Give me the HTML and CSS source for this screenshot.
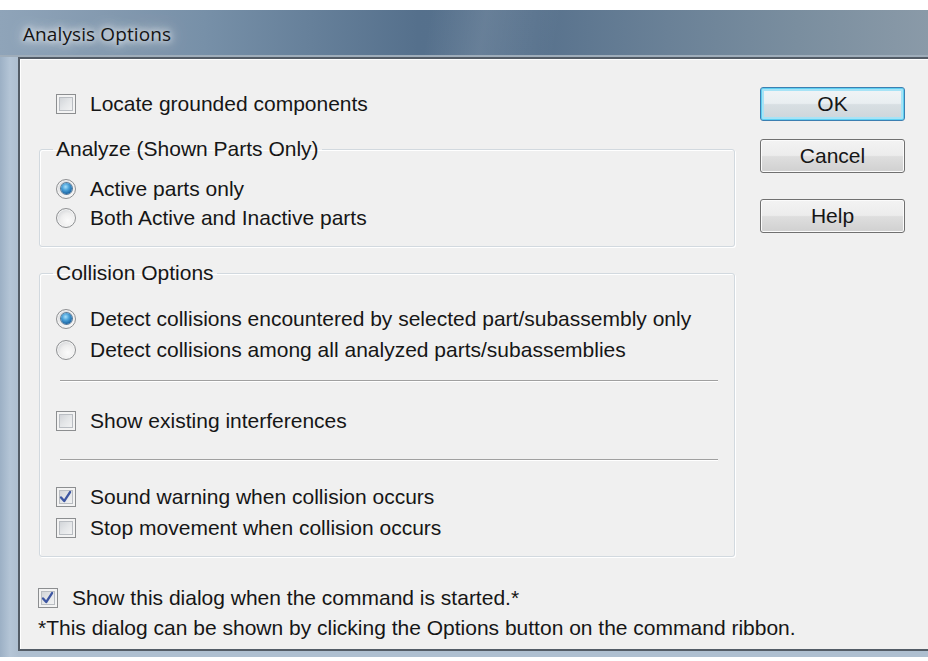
FILE: index.html
```html
<!DOCTYPE html>
<html lang="en">
<head>
<meta charset="utf-8">
<title>Analysis Options</title>
<link rel="stylesheet" href="styles.css">
</head>
<body>
<div class="window">
  <div class="titlebar"><span class="title">Analysis Options</span></div>
  <div class="frame">
    <div class="client">
      <div class="main">
        <div class="options">
          <div class="row locate"><span class="cb"></span><span>Locate grounded components</span></div>

          <fieldset class="group analyze">
            <legend>Analyze (Shown Parts Only)</legend>
            <div class="row"><span class="rb on"><span class="dot"></span></span><span>Active parts only</span></div>
            <div class="row"><span class="rb"></span><span>Both Active and Inactive parts</span></div>
          </fieldset>

          <fieldset class="group collision">
            <legend>Collision Options</legend>
            <div class="row tall"><span class="rb on"><span class="dot"></span></span><span>Detect collisions encountered by selected part/subassembly only</span></div>
            <div class="row tall"><span class="rb"></span><span>Detect collisions among all analyzed parts/subassemblies</span></div>
            <hr class="sep sep1">
            <div class="row interf"><span class="cb"></span><span>Show existing interferences</span></div>
            <hr class="sep sep2">
            <div class="row tall sound"><span class="cb checked"><svg viewBox="0 0 20 20" width="18" height="18"><path d="M4.5 10.5 L8 14.5 L14.5 4.5" fill="none" stroke="#3d56a2" stroke-width="2.6" stroke-linecap="round" stroke-linejoin="round"/></svg></span><span>Sound warning when collision occurs</span></div>
            <div class="row tall"><span class="cb"></span><span>Stop movement when collision occurs</span></div>
          </fieldset>
        </div>

        <div class="buttons">
          <button class="btn default">OK</button>
          <button class="btn cancel">Cancel</button>
          <button class="btn help">Help</button>
        </div>
      </div>

      <div class="footer">
        <div class="row showdlg"><span class="cb checked"><svg viewBox="0 0 20 20" width="18" height="18"><path d="M4.5 10.5 L8 14.5 L14.5 4.5" fill="none" stroke="#3d56a2" stroke-width="2.6" stroke-linecap="round" stroke-linejoin="round"/></svg></span><span>Show this dialog when the command is started.*</span></div>
        <div class="row note">*This dialog can be shown by clicking the Options button on the command ribbon.</div>
      </div>
    </div>
  </div>
</div>
</body>
</html>
```

FILE: styles.css
```css
html, body {
  margin: 0;
  padding: 0;
  background: #ffffff;
}

body {
  font-family: "Liberation Sans", Arial, sans-serif;
  font-size: 21px;
  color: #161616;
  overflow: hidden;
}

.window {
  margin-top: 10px;
  width: 928px;
}

/* glass caption bar */
.titlebar {
  height: 47px;
  display: flex;
  align-items: center;
  padding-left: 23px;
  background:
    linear-gradient(100deg, rgba(255,255,255,0) 0%, rgba(255,255,255,0) 46%, rgba(255,255,255,0.10) 52%, rgba(255,255,255,0) 60%),
    linear-gradient(to right, #8fa4b9 0%, #8399af 12%, #7790a8 22%, #55708c 45%, #58728d 58%, #6a8197 72%, #7a8e9f 86%, #8a9aa8 100%);
  box-shadow: inset 0 -2px 0 #9fadba;
}

.title {
  font-family: "Open Sans", "Noto Sans", sans-serif;
  font-size: 19px;
  color: #151515;
  letter-spacing: 0.1px;
  text-shadow: 0 0 6px rgba(255,255,255,0.95), 0 0 12px rgba(255,255,255,0.9), 0 0 20px rgba(255,255,255,0.7);
}

/* window frame around the client area */
.frame {
  padding: 0 0 6px 18px;
  background: linear-gradient(to right, #9cb0c5 0px, #b4c5d6 10px, #aebfd0 18px);
}

.client {
  background: #f0f0f0;
  border-left: 2px solid #535c66;
  border-top: 2px solid #535c66;
  border-bottom: 2px solid #535c66;
  box-shadow: inset 1px 1px 0 #ffffff;
  height: 594px;
  box-sizing: border-box;
  display: flex;
  flex-direction: column;
}

.main {
  display: flex;
}

.options {
  width: 696px;
  margin-left: 19px;
  padding-top: 30px;
}

.row {
  display: flex;
  align-items: center;
  gap: 14px;
  height: 29px;
  white-space: nowrap;
}

.row.tall {
  height: 31px;
}

.locate {
  height: 30px;
  padding-left: 17px;
}

/* checkbox */
.cb {
  width: 20px;
  height: 20px;
  flex: none;
  box-sizing: border-box;
  border: 1px solid #8c8e90;
  background: linear-gradient(135deg, #c9ccd1 0%, #e4e6e8 50%, #f8f8f8 100%);
  box-shadow: inset 0 0 0 2px #f3f3f3, inset 0 0 0 3px #b9bdc2;
  display: flex;
  align-items: center;
  justify-content: center;
}

/* radio button */
.rb {
  width: 20px;
  height: 20px;
  flex: none;
  box-sizing: border-box;
  border-radius: 50%;
  border: 1px solid #8f9193;
  background: radial-gradient(circle at 60% 65%, #fbfbfb 0%, #eeeeee 45%, #d3d5d8 80%);
  box-shadow: inset 0 0 0 1px #f6f6f6;
  display: flex;
  align-items: center;
  justify-content: center;
}

.rb .dot {
  width: 11px;
  height: 11px;
  border-radius: 50%;
  background: radial-gradient(circle at 42% 35%, #a9e0fb 0%, #4ba2d9 35%, #1f6aa8 70%, #164f83 100%);
  box-shadow: 0 0 0 1px #5a7a98;
}

/* group boxes */
.group {
  margin: 0;
  border: 1px solid #d2d9df;
  border-radius: 3px;
  box-shadow: inset 1px 1px 0 #ffffff, 1px 1px 0 #ffffff;
  padding: 0 16px 0 16px;
  min-width: 0;
}

.group legend {
  margin-left: -3px;
  padding: 0 3px;
  line-height: 24px;
  height: 24px;
}

.analyze {
  margin-top: 18px;
  padding-top: 13px;
  padding-bottom: 14px;
}

.collision {
  margin-top: 14px;
  padding-top: 18px;
  padding-bottom: 13px;
}

.sep {
  margin: 0 0 0 4px;
  border: 0;
  height: 1px;
  background: #a0a0a0;
  box-shadow: 0 1px 0 #ffffff;
}

.sep1 {
  margin-top: 15px;
}

.interf {
  margin-top: 25px;
  height: 30px;
}

.sep2 {
  margin-top: 23px;
}

.sound {
  margin-top: 21px;
}

/* command buttons */
.buttons {
  margin-left: 25px;
  padding-top: 28px;
  width: 145px;
  display: flex;
  flex-direction: column;
}

.btn {
  height: 34px;
  width: 145px;
  font-family: "Liberation Sans", Arial, sans-serif;
  font-size: 21px;
  color: #161616;
  border: 1px solid #707070;
  border-radius: 3px;
  background: linear-gradient(#f3f3f3 0%, #ececec 48%, #dedede 52%, #d0d0d0 100%);
  box-shadow: inset 0 0 0 1px #fbfbfb;
  padding: 0;
}

.btn.default {
  border-color: #3c7fb1;
  box-shadow: inset 0 0 0 1px #5fd0f2, inset 0 0 0 3px #a7e3f6;
  background: linear-gradient(#f1f5f7 0%, #e9eef1 48%, #d8dfe3 52%, #cdd5da 100%);
}

.btn.cancel {
  margin-top: 18px;
}

.btn.help {
  margin-top: 26px;
}

/* bottom area */
.footer {
  padding-left: 18px;
  margin-top: 25px;
}

.showdlg {
  height: 31px;
}

.note {
  height: 30px;
}
```
